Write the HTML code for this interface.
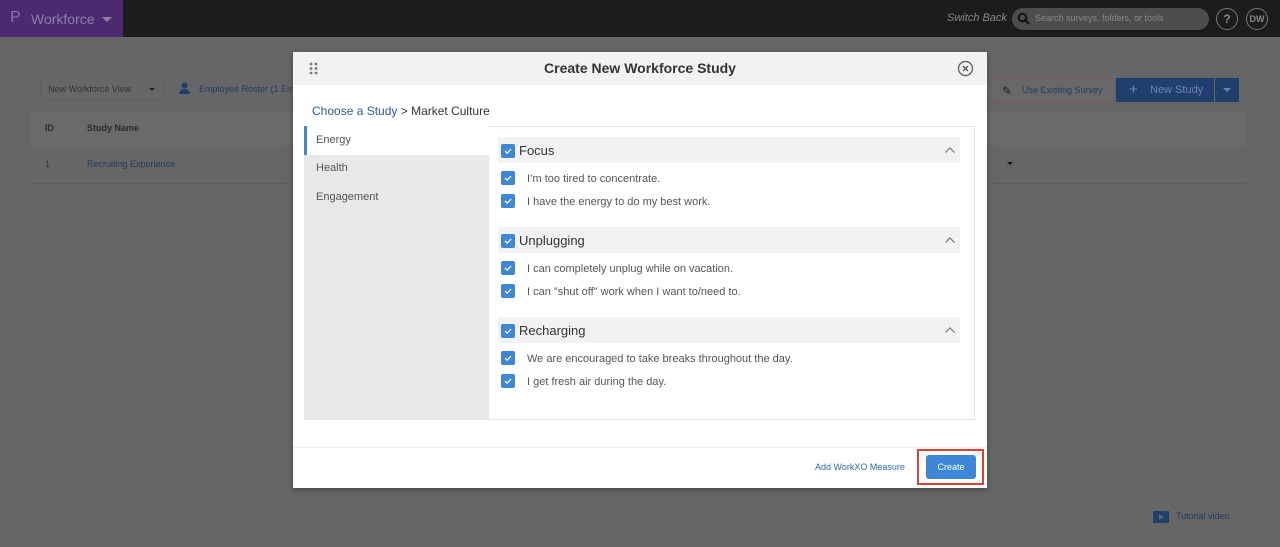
<!DOCTYPE html>
<html><head><meta charset="utf-8"><style>
*{box-sizing:border-box;margin:0;padding:0}
body{width:1280px;height:547px;overflow:hidden;background:#666;font-family:"Liberation Sans",sans-serif;position:relative}
.a{position:absolute}
.cb{position:absolute;width:14px;height:14px;background:#3d86d8;border-radius:2px}
.cb svg{position:absolute;left:2px;top:2px}
.it{position:absolute;left:527px;font-size:11px;color:#555}
.sh{position:absolute;left:498px;width:462px;height:26px;background:#f2f2f2}
.sh span{position:absolute;left:21px;top:6px;font-size:13px;color:#333}
.sh svg{position:absolute;right:4px;top:9px}
</style></head><body>
<div class="a" style="left:0;top:0;width:1280px;height:37px;background:#1c1c1c"></div>
<div class="a" style="left:0;top:0;width:123px;height:37px;background:#4a2a70"></div>
<div class="a" style="left:10px;top:9px;font-size:16px;color:#8a76a5">P</div>
<div class="a" style="left:31px;top:11px;font-size:14px;color:#8e80a2">Workforce</div>
<div class="a" style="left:102px;top:17px;border:5px solid transparent;border-top-color:#8e80a2;border-bottom:0"></div>
<div class="a" style="left:947px;top:12px;font-size:11px;font-style:italic;color:#888">Switch Back</div>
<div class="a" style="left:1012px;top:8px;width:197px;height:22px;border-radius:11px;background:#4d4d4d"></div>
<svg class="a" style="left:1017px;top:12px" width="14" height="14"><circle cx="5.5" cy="5.5" r="3.8" stroke="#111" stroke-width="2" fill="none"/><path d="M8.5 8.5 L12 12" stroke="#111" stroke-width="2.2"/></svg>
<div class="a" style="left:1035px;top:13px;font-size:9px;color:#888">Search surveys, folders, or tools</div>
<div class="a" style="left:1216px;top:8px;width:22px;height:22px;border:1px solid #777;border-radius:50%;color:#888;font-size:12px;font-weight:bold;text-align:center;line-height:20px">?</div>
<div class="a" style="left:1246px;top:8px;width:22px;height:22px;border:1px solid #777;border-radius:50%;color:#888;font-size:9px;font-weight:bold;text-align:center;line-height:20px">DW</div>

<div class="a" style="left:41px;top:78px;width:124px;height:23px;border:1px solid #5f5f5f;background:#676767"></div>
<div class="a" style="left:48px;top:84px;font-size:9px;color:#333">New Workforce View</div>
<div class="a" style="left:149px;top:88px;border:3px solid transparent;border-top-color:#222;border-bottom:0"></div>
<svg class="a" style="left:178px;top:82px" width="13" height="13"><circle cx="6.5" cy="3.5" r="3" fill="#1f3f6a"/><path d="M1 12 Q1 7 6.5 7 Q12 7 12 12 Z" fill="#1f3f6a"/></svg>
<div class="a" style="left:199px;top:84px;font-size:9px;color:#223c62">Employee Roster (1 Em</div>
<div class="a" style="left:30px;top:112px;width:1216px;height:34px;background:#6a6a6a"></div>
<div class="a" style="left:45px;top:123px;font-size:9px;font-weight:bold;color:#2a2a2a">ID</div>
<div class="a" style="left:87px;top:123px;font-size:9px;font-weight:bold;color:#2a2a2a">Study Name</div>
<div class="a" style="left:45px;top:159px;font-size:9px;color:#333">1</div>
<div class="a" style="left:87px;top:159px;font-size:9px;color:#243c5e">Recruiting Experience</div>
<div class="a" style="left:30px;top:183px;width:1216px;height:1px;background:#5e5e5e"></div>
<div class="a" style="left:986px;top:78px;width:130px;height:24px;border:1px solid #7a5a5a;border-left:0;background:#686868"></div>
<div class="a" style="left:1002px;top:84px;font-size:12px;color:#222">✎</div>
<div class="a" style="left:1022px;top:85px;font-size:9px;color:#233e66">Use Existing Survey</div>
<div class="a" style="left:1116px;top:78px;width:98px;height:24px;background:#1f3f6c"></div>
<div class="a" style="left:1215px;top:78px;width:24px;height:24px;background:#1f3f6c"></div>
<div class="a" style="left:1129px;top:81px;font-size:15px;color:#6d85a6">+</div>
<div class="a" style="left:1150px;top:84px;font-size:11px;color:#6d85a6">New Study</div>
<div class="a" style="left:1223px;top:88px;border:4px solid transparent;border-top-color:#6d85a6;border-bottom:0"></div>
<div class="a" style="left:1007px;top:162px;border:3px solid transparent;border-top-color:#111;border-bottom:0"></div>
<div class="a" style="left:1153px;top:511px;width:16px;height:12px;background:#1f3f6c;border-radius:1px"></div>
<div class="a" style="left:1159px;top:514px;border:3px solid transparent;border-left:5px solid #666;border-right:0"></div>
<div class="a" style="left:1176px;top:511px;font-size:9px;color:#233e66">Tutorial video</div>

<div class="a" style="left:293px;top:52px;width:694px;height:436px;background:#fff;box-shadow:0 2px 6px rgba(0,0,0,.3)"></div>
<div class="a" style="left:293px;top:52px;width:694px;height:33px;background:#f2f2f2"></div>
<svg class="a" style="left:309px;top:62px" width="10" height="13"><g fill="#777"><circle cx="2" cy="2" r="1.4"/><circle cx="7" cy="2" r="1.4"/><circle cx="2" cy="6.5" r="1.4"/><circle cx="7" cy="6.5" r="1.4"/><circle cx="2" cy="11" r="1.4"/><circle cx="7" cy="11" r="1.4"/></g></svg>
<div class="a" style="left:293px;top:60px;width:694px;text-align:center;font-size:14px;font-weight:bold;color:#333">Create New Workforce Study</div>
<svg class="a" style="left:957px;top:60px" width="17" height="17"><circle cx="8.5" cy="8.5" r="7" stroke="#666" stroke-width="1.4" fill="none"/><path d="M6 6 L11 11 M11 6 L6 11" stroke="#555" stroke-width="1.3"/></svg>
<div class="a" style="left:312px;top:104px;font-size:12px;color:#2a5b94">Choose a Study <span style="color:#333">&gt; Market Culture</span></div>
<div class="a" style="left:304px;top:126px;width:671px;height:294px;border:1px solid #e3e3e3;background:#fff"></div>
<div class="a" style="left:304px;top:126px;width:185px;height:294px;background:#e8e8e8"></div>
<div class="a" style="left:304px;top:126px;width:185px;height:29px;background:#fff;border-left:3px solid #3d86d8"></div>
<div class="a" style="left:316px;top:134px;font-size:11px;color:#555">Energy</div>
<div class="a" style="left:316px;top:162px;font-size:11px;color:#555">Health</div>
<div class="a" style="left:316px;top:191px;font-size:11px;color:#555">Engagement</div>

<div class="sh" style="top:137px"><span>Focus</span><svg width="12" height="8"><path d="M1.5 6.5 L6 2 L10.5 6.5" stroke="#777" stroke-width="1.2" fill="none"/></svg></div>
<div class="sh" style="top:227px"><span>Unplugging</span><svg width="12" height="8"><path d="M1.5 6.5 L6 2 L10.5 6.5" stroke="#777" stroke-width="1.2" fill="none"/></svg></div>
<div class="sh" style="top:317px"><span>Recharging</span><svg width="12" height="8"><path d="M1.5 6.5 L6 2 L10.5 6.5" stroke="#777" stroke-width="1.2" fill="none"/></svg></div>
<div class="cb" style="left:501px;top:144px"><svg width="10" height="10"><path d="M2 5 L4.2 7.2 L8 3" stroke="#fff" stroke-width="1.3" fill="none"/></svg></div>
<div class="cb" style="left:501px;top:234px"><svg width="10" height="10"><path d="M2 5 L4.2 7.2 L8 3" stroke="#fff" stroke-width="1.3" fill="none"/></svg></div>
<div class="cb" style="left:501px;top:324px"><svg width="10" height="10"><path d="M2 5 L4.2 7.2 L8 3" stroke="#fff" stroke-width="1.3" fill="none"/></svg></div>
<div class="cb" style="left:501px;top:171px"><svg width="10" height="10"><path d="M2 5 L4.2 7.2 L8 3" stroke="#fff" stroke-width="1.3" fill="none"/></svg></div>
<div class="cb" style="left:501px;top:194px"><svg width="10" height="10"><path d="M2 5 L4.2 7.2 L8 3" stroke="#fff" stroke-width="1.3" fill="none"/></svg></div>
<div class="cb" style="left:501px;top:261px"><svg width="10" height="10"><path d="M2 5 L4.2 7.2 L8 3" stroke="#fff" stroke-width="1.3" fill="none"/></svg></div>
<div class="cb" style="left:501px;top:284px"><svg width="10" height="10"><path d="M2 5 L4.2 7.2 L8 3" stroke="#fff" stroke-width="1.3" fill="none"/></svg></div>
<div class="cb" style="left:501px;top:351px"><svg width="10" height="10"><path d="M2 5 L4.2 7.2 L8 3" stroke="#fff" stroke-width="1.3" fill="none"/></svg></div>
<div class="cb" style="left:501px;top:374px"><svg width="10" height="10"><path d="M2 5 L4.2 7.2 L8 3" stroke="#fff" stroke-width="1.3" fill="none"/></svg></div>
<div class="it" style="top:173px">I’m too tired to concentrate.</div>
<div class="it" style="top:196px">I have the energy to do my best work.</div>
<div class="it" style="top:263px">I can completely unplug while on vacation.</div>
<div class="it" style="top:286px">I can "shut off" work when I want to/need to.</div>
<div class="it" style="top:353px">We are encouraged to take breaks throughout the day.</div>
<div class="it" style="top:376px">I get fresh air during the day.</div>

<div class="a" style="left:293px;top:447px;width:694px;height:1px;background:#eee"></div>
<div class="a" style="left:815px;top:462px;font-size:9px;color:#2d6cb0">Add WorkXO Measure</div>
<div class="a" style="left:917px;top:449px;width:67px;height:36px;border:2px solid #d9432f"></div>
<div class="a" style="left:926px;top:455px;width:50px;height:24px;background:#3d86d8;border-radius:3px;color:#fff;font-size:9px;text-align:center;line-height:24px">Create</div>
</body></html>
